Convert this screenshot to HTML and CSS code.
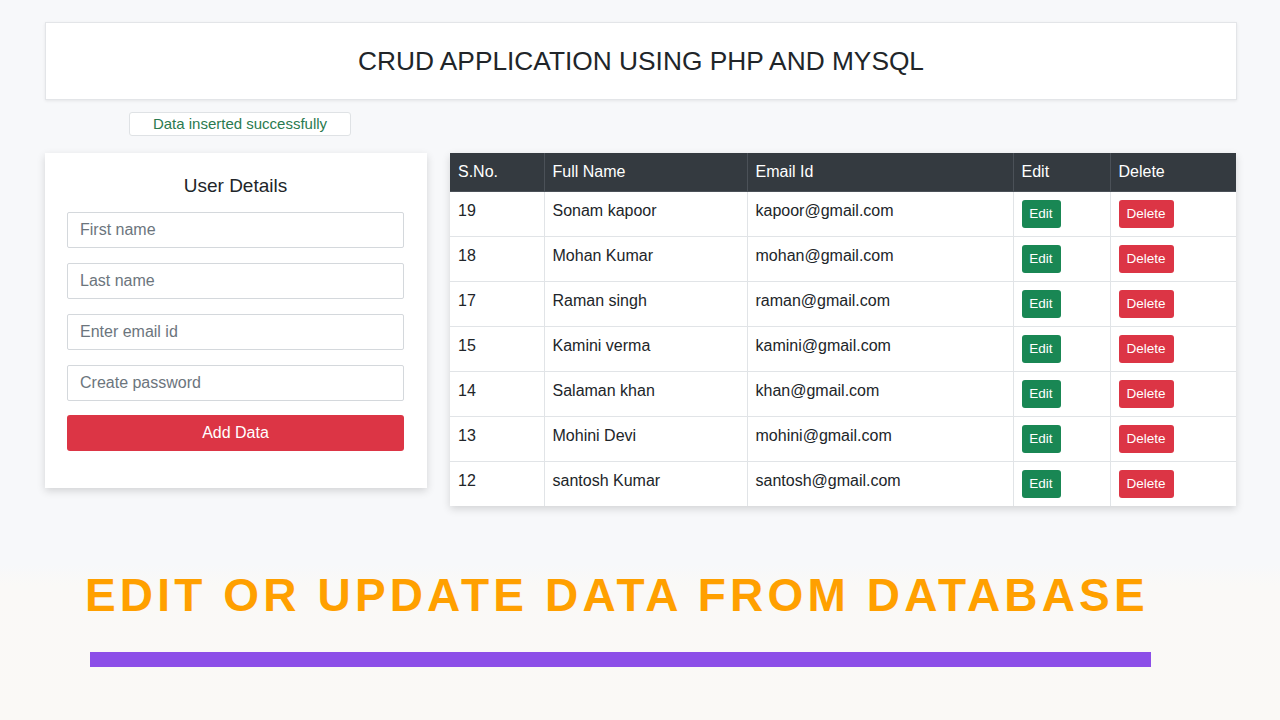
FILE: index.html
```html
<!DOCTYPE html>
<html>
<head>
<meta charset="utf-8">
<link rel="stylesheet" href="styles.css">
</head>
<body>
<div class="top">
  <header class="header-card"><h1>CRUD APPLICATION USING PHP AND MYSQL</h1></header>
  <div class="alert">Data inserted successfully</div>
  <div class="main">
    <form class="form-card">
      <h2>User Details</h2>
      <input class="field" type="text" placeholder="First name">
      <input class="field" type="text" placeholder="Last name">
      <input class="field" type="text" placeholder="Enter email id">
      <input class="field" type="password" placeholder="Create password">
      <button type="button" class="btn-add">Add Data</button>
    </form>
    <table class="data">
      <colgroup>
        <col class="c1"><col class="c2"><col class="c3"><col class="c4"><col class="c5">
      </colgroup>
      <thead>
        <tr><th>S.No.</th><th>Full Name</th><th>Email Id</th><th>Edit</th><th>Delete</th></tr>
      </thead>
      <tbody>
        <tr><td>19</td><td>Sonam kapoor</td><td>kapoor@gmail.com</td><td><span class="btn edit">Edit</span></td><td><span class="btn del">Delete</span></td></tr>
        <tr><td>18</td><td>Mohan Kumar</td><td>mohan@gmail.com</td><td><span class="btn edit">Edit</span></td><td><span class="btn del">Delete</span></td></tr>
        <tr><td>17</td><td>Raman singh</td><td>raman@gmail.com</td><td><span class="btn edit">Edit</span></td><td><span class="btn del">Delete</span></td></tr>
        <tr><td>15</td><td>Kamini verma</td><td>kamini@gmail.com</td><td><span class="btn edit">Edit</span></td><td><span class="btn del">Delete</span></td></tr>
        <tr><td>14</td><td>Salaman khan</td><td>khan@gmail.com</td><td><span class="btn edit">Edit</span></td><td><span class="btn del">Delete</span></td></tr>
        <tr><td>13</td><td>Mohini Devi</td><td>mohini@gmail.com</td><td><span class="btn edit">Edit</span></td><td><span class="btn del">Delete</span></td></tr>
        <tr><td>12</td><td>santosh Kumar</td><td>santosh@gmail.com</td><td><span class="btn edit">Edit</span></td><td><span class="btn del">Delete</span></td></tr>
      </tbody>
    </table>
  </div>
</div>
<section class="banner">
  <h3>EDIT OR UPDATE DATA FROM DATABASE</h3>
  <div class="bar"></div>
</section>
</body>
</html>
```
FILE: styles.css
```css
* { box-sizing: border-box; }
html, body { margin: 0; padding: 0; }
body {
  width: 1280px;
  height: 720px;
  overflow: hidden;
  background: #f7f8fa;
  font-family: "Liberation Sans", Arial, sans-serif;
  color: #212529;
}
.top {
  padding: 22px 43px 0 45px;
  height: 565px;
}
.header-card {
  height: 78px;
  background: #fff;
  border: 1px solid #e3e5e8;
  box-shadow: 0 1px 3px rgba(0,0,0,0.08);
  display: flex;
  align-items: center;
  justify-content: center;
}
.header-card h1 {
  margin: 0;
  font-size: 26.3px;
  font-weight: 400;
  color: #212529;
}
.alert {
  margin: 12px 0 0 84px;
  width: 222px;
  height: 24px;
  background: #fff;
  border: 1px solid #dfe2e5;
  border-radius: 3px;
  color: #2a7a4f;
  font-size: 15px;
  line-height: 22px;
  text-align: center;
}
.main {
  display: flex;
  gap: 23px;
  align-items: flex-start;
  margin-top: 17px;
}
.form-card {
  width: 382px;
  background: #fff;
  box-shadow: 0 3px 8px rgba(0,0,0,0.15);
  padding: 21px 23px 37px 22px;
  display: flex;
  flex-direction: column;
}
.form-card h2 {
  margin: 0 0 14px;
  font-size: 19px;
  line-height: 24px;
  font-weight: 400;
  text-align: center;
  color: #212529;
}
.field {
  height: 36px;
  width: 100%;
  border: 1px solid #d4d8dc;
  border-radius: 2px;
  padding: 0 12px;
  margin-bottom: 15px;
  font-family: inherit;
  font-size: 16px;
  color: #212529;
  background: #fff;
}
.field::placeholder { color: #6c757d; }
.btn-add {
  height: 36px;
  width: 100%;
  margin-top: -1px;
  border: 0;
  border-radius: 3px;
  background: #dc3545;
  color: #fff;
  font-family: inherit;
  font-size: 16px;
}
.data {
  width: 786px;
  border-collapse: collapse;
  table-layout: fixed;
  background: #fff;
  box-shadow: 0 3px 8px rgba(0,0,0,0.15);
  font-size: 16px;
}
.c1 { width: 94px; }
.c2 { width: 203px; }
.c3 { width: 266px; }
.c4 { width: 97px; }
.c5 { width: 126px; }
.data th {
  background: #343a40;
  color: #fff;
  font-weight: 400;
  text-align: left;
  height: 38px;
  padding: 0 8px;
  border: 1px solid #4b5158;
  border-top: 0;
}
.data th:first-child { border-left: 0; }
.data th:last-child { border-right: 0; }
.data td {
  height: 45px;
  padding: 8px 8px 0;
  vertical-align: top;
  line-height: 22px;
  border: 1px solid #e1e4e7;
  color: #212529;
}
.data td:first-child { border-left: 0; }
.data td:last-child { border-right: 0; }
.data tr:last-child td { border-bottom: 0; }
.btn {
  display: inline-block;
  height: 28px;
  line-height: 28px;
  border-radius: 3px;
  color: #fff;
  font-size: 13.5px;
  text-align: center;
}
.edit { background: #198754; width: 39px; }
.del { background: #dc3545; width: 55px; }
.banner {
  height: 155px;
  background: linear-gradient(#f7f8fa 0, #faf9f7 20px, #faf9f6 100%);
  padding: 4px 0 0 85px;
}
.banner h3 {
  margin: 0;
  font-size: 46px;
  line-height: 52px;
  font-weight: 700;
  letter-spacing: 4.15px;
  color: #ffa000;
  white-space: nowrap;
}
.bar {
  margin: 31px 0 0 5px;
  width: 1061px;
  height: 15px;
  background: #8c4fe8;
}
```
